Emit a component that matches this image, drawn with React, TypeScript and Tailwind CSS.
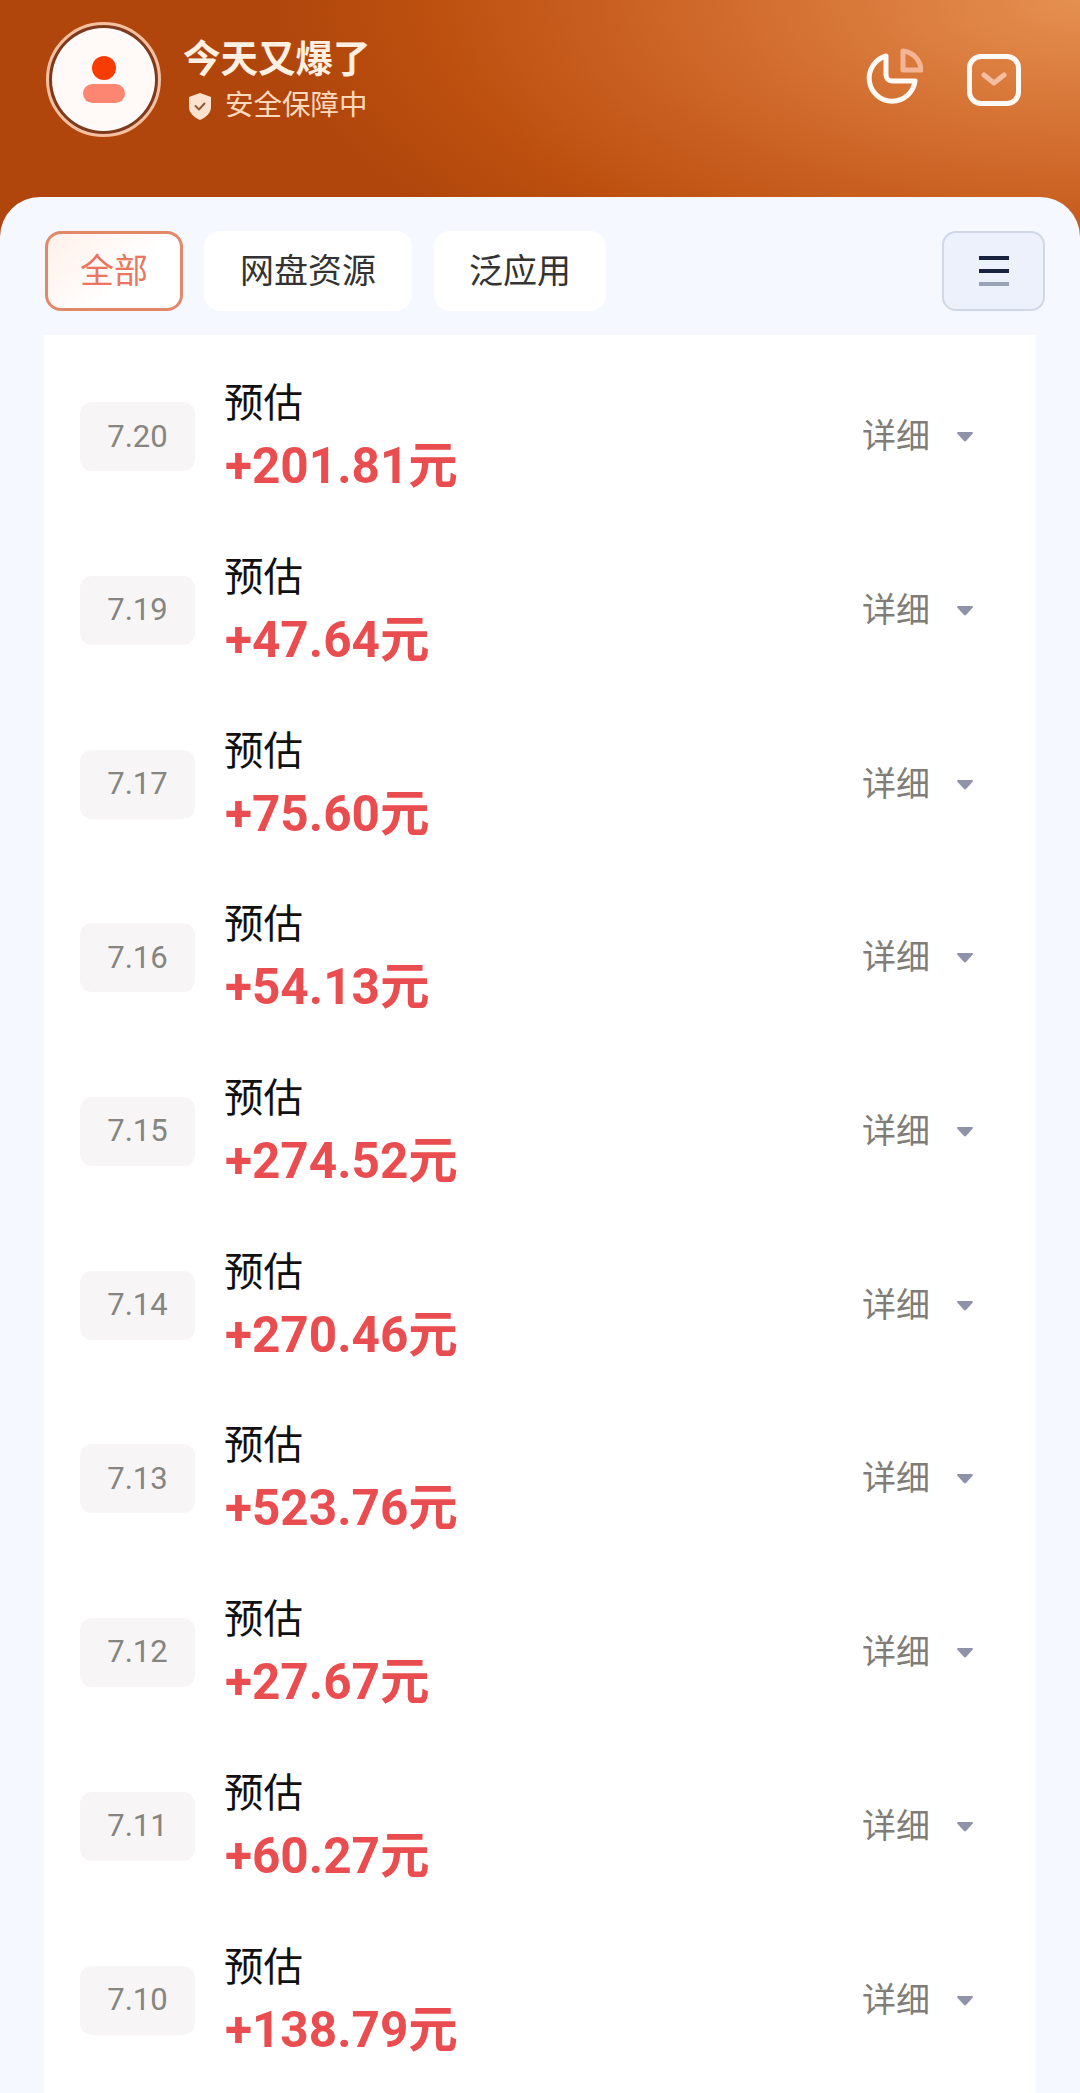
const rows = [
  { date: "7.20", amount: "+201.81元" },
  { date: "7.19", amount: "+47.64元" },
  { date: "7.17", amount: "+75.60元" },
  { date: "7.16", amount: "+54.13元" },
  { date: "7.15", amount: "+274.52元" },
  { date: "7.14", amount: "+270.46元" },
  { date: "7.13", amount: "+523.76元" },
  { date: "7.12", amount: "+27.67元" },
  { date: "7.11", amount: "+60.27元" },
  { date: "7.10", amount: "+138.79元" },
];

const font = "font-['Roboto','Noto_Sans_CJK_SC',sans-serif]";

function Avatar() {
  return (
    <div className="flex h-[115px] w-[115px] shrink-0 items-center justify-center rounded-full border-[3px] border-[#f6c0a0] bg-[#7d3a1c]">
      <div className="flex h-[103px] w-[103px] flex-col items-center justify-center gap-[4px] rounded-full bg-[#fffaf7]">
        <div className="h-[24px] w-[24px] rounded-full bg-[#f73c05]" />
        <div className="h-[19px] w-[42px] rounded-[10px] bg-[#fd8672]" />
      </div>
    </div>
  );
}

function Shield() {
  return (
    <svg viewBox="0 0 22 27" className="h-[27px] w-[22px]">
      <path
        d="M11 0 L22 4 V14 C22 20 17 24.500 11 27 C5 24.500 0 20 0 14 V4 Z"
        fill="#fde3cf"
      />
      <path
        d="M6.500 13 L10 16.500 L15.500 10.500"
        fill="none"
        stroke="#8f5a3a"
        strokeWidth="2"
        strokeLinecap="round"
        strokeLinejoin="round"
      />
    </svg>
  );
}

function PieIcon() {
  return (
    <svg viewBox="0 0 58 58" className="h-[58px] w-[58px]">
      <path
        d="M21 8 A23 23 0 1 0 50 33 H27 A6 6 0 0 1 21 27 Z"
        fill="none"
        stroke="#fffaf6"
        strokeWidth="5"
        strokeLinejoin="round"
      />
      <path
        d="M38 3 A20 20 0 0 1 56 22 H38 Z"
        fill="none"
        stroke="#f3b596"
        strokeWidth="5"
        strokeLinejoin="round"
      />
    </svg>
  );
}

function MailIcon() {
  return (
    <div className="flex h-[52px] w-[54px] items-center justify-center rounded-[14px] border-[5px] border-[#fffaf6]">
      <svg viewBox="0 0 26 16" className="h-[16px] w-[26px]">
        <path
          d="M3 3 L13 11 L23 3"
          fill="none"
          stroke="#f6bda0"
          strokeWidth="5"
          strokeLinecap="round"
          strokeLinejoin="round"
        />
      </svg>
    </div>
  );
}

function Row({ date, amount }: { date: string; amount: string }) {
  return (
    <div className="flex h-[173.7px] items-center pl-[36px] pr-[62px]">
      <div className="flex h-[69px] w-[115px] shrink-0 items-center justify-center rounded-[12px] bg-[#f8f5f6] text-[31px] text-[#858581]">
        {date}
      </div>
      <div className="ml-[30px] flex flex-col">
        <div className="-ml-[1px] text-[39.500px] leading-[56px] text-[#111111]">
          预估
        </div>
        <div className="mt-[3px] text-[49.500px] leading-[62px] font-bold text-[#ea4d4f]">
          {amount}
        </div>
      </div>
      <div className="ml-auto flex items-center gap-[26px]">
        <span className="text-[34px] text-[#807d79]">详细</span>
        <svg viewBox="0 0 18 11" className="h-[11px] w-[18px]">
          <path
            d="M2 1 H16 A1 1 0 0 1 16.800 2.600 L10 10 A1.500 1.500 0 0 1 8 10 L1.200 2.600 A1 1 0 0 1 2 1 Z"
            fill="#8f93a8"
          />
        </svg>
      </div>
    </div>
  );
}

export default function App() {
  return (
    <div className={`${font} h-[2093px] w-[1080px] overflow-hidden bg-[#f6f8ff]`}>
      <header className="-mb-[40px] flex h-[237px] items-start bg-[radial-gradient(ellipse_75%_150%_at_100%_0%,#e59050_0%,#d06a2c_45%,#bd500f_80%,#b0460c_100%)] pl-[46px] pr-[59px] pt-[22px]">
        <Avatar />
        <div className="ml-[22px] mt-[14px]">
          <div className="text-[37.500px] leading-[46px] font-bold text-[#fff0e2]">
            今天又爆了
          </div>
          <div className="mt-[5px] ml-[6px] flex items-center gap-[14px] text-[28.500px] leading-[38px] text-[#fcd9bd]">
            <Shield />
            安全保障中
          </div>
        </div>
        <div className="ml-auto mt-[26px] flex items-end gap-[44px]">
          <PieIcon />
          <MailIcon />
        </div>
      </header>

      <main className="relative rounded-t-[40px] bg-[#f6f8ff] pl-[45px] pr-[44px] pt-[34px]">
        <nav className="flex items-center">
          <button className="flex h-[80px] w-[138px] items-center justify-center rounded-[16px] border-[3px] border-[#e28768] bg-[linear-gradient(135deg,#fff0ea,#ffffff_60%)] text-[34px] text-[#ea7560]">
            全部
          </button>
          <button className="ml-[21px] flex h-[80px] w-[208px] items-center justify-center rounded-[16px] bg-white text-[34px] text-[#333333]">
            网盘资源
          </button>
          <button className="ml-[22px] flex h-[80px] w-[172px] items-center justify-center rounded-[16px] bg-white text-[34px] text-[#333333]">
            泛应用
          </button>
          <button className="ml-auto mr-[-9px] flex h-[80px] w-[103px] flex-col items-center justify-center gap-[9px] rounded-[14px] border-2 border-[#d0d8e8] bg-[#edf1fb]">
            <span className="h-[4px] w-[30px] bg-[#17233f]" />
            <span className="h-[4px] w-[30px] bg-[#17233f]" />
            <span className="h-[4px] w-[30px] bg-[#9aa3b5]" />
          </button>
        </nav>
        <section className="-ml-[1px] mt-[24px] bg-white pb-[40px] pt-[15px]">
          {rows.map((row) => (
            <Row key={row.date} date={row.date} amount={row.amount} />
          ))}
        </section>
      </main>
    </div>
  );
}
